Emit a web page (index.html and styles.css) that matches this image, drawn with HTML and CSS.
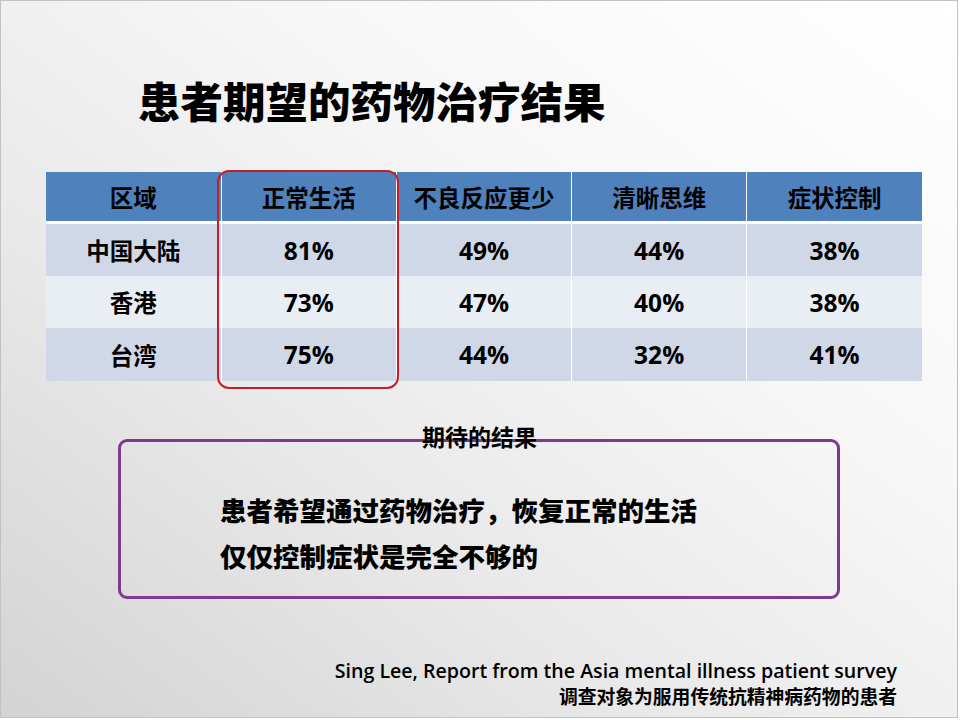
FILE: index.html
```html
<!DOCTYPE html>
<html lang="zh-CN">
<head>
<meta charset="utf-8">
<title>患者期望的药物治疗结果</title>
<link rel="stylesheet" href="styles.css">
</head>
<body>
<div class="slide">
  <h1 class="title">患者期望的药物治疗结果</h1>
  <div class="table-wrap">
    <table class="data">
      <thead>
        <tr><th>区域</th><th>正常生活</th><th>不良反应更少</th><th>清晰思维</th><th>症状控制</th></tr>
      </thead>
      <tbody>
        <tr class="odd"><td class="region">中国大陆</td><td>81%</td><td>49%</td><td>44%</td><td>38%</td></tr>
        <tr class="even"><td class="region">香港</td><td>73%</td><td>47%</td><td>40%</td><td>38%</td></tr>
        <tr class="odd last"><td class="region">台湾</td><td>75%</td><td>44%</td><td>32%</td><td>41%</td></tr>
      </tbody>
    </table>
    <div class="highlight"></div>
  </div>
  <div class="callout">
    <div class="callout-label">期待的结果</div>
    <p>患者希望通过药物治疗，恢复正常的生活</p>
    <p>仅仅控制症状是完全不够的</p>
  </div>
  <div class="footer">
    <div class="cite">Sing Lee, Report from the Asia mental illness patient survey</div>
    <div class="note">调查对象为服用传统抗精神病药物的患者</div>
  </div>
</div>
</body>
</html>
```
FILE: styles.css
```css
html, body {
  margin: 0;
  padding: 0;
  background: #ffffff;
}
body {
  font-family: "Noto Sans CJK SC", "Open Sans", sans-serif;
  color: #000;
}
.slide {
  box-sizing: border-box;
  width: 958px;
  height: 718px;
  border: 1px solid #c2c2c2;
  background: linear-gradient(to top right, #d3d3d3 0%, #e9e9e9 35%, #f7f7f7 65%, #ffffff 100%);
  display: flex;
  flex-direction: column;
  position: relative;
}
.title {
  margin: 0;
  padding: 76px 0 0 137px;
  font-family: "Noto Sans CJK SC", sans-serif;
  font-weight: 900;
  font-size: 42.5px;
  line-height: 46px;
  color: #000;
}
.table-wrap {
  position: relative;
  margin: 49px 0 0 45px;
  width: 876px;
}
.data {
  border-collapse: collapse;
  table-layout: fixed;
  width: 876px;
}
.data th,
.data td {
  padding: 0;
  text-align: center;
  vertical-align: middle;
  border-left: 1px solid #ffffff;
}
.data th:first-child,
.data td:first-child {
  border-left: none;
}
.data th {
  background: #4f81bd;
  height: 49px;
  border-bottom: 3px solid #ffffff;
  font-family: "Noto Sans CJK SC", sans-serif;
  font-weight: 700;
  font-size: 23.5px;
  color: #000;
}
.data td {
  height: 52px;
  font-family: "Open Sans", sans-serif;
  font-weight: 700;
  font-size: 24.5px;
  color: #000;
}
.data td.region {
  font-family: "Noto Sans CJK SC", sans-serif;
  font-size: 23.5px;
}
.data tr.odd td {
  background: #d0d8e8;
}
.data tr.even td {
  background: #e9edf4;
}
.data tr.last td {
  height: 53px;
}
.highlight {
  position: absolute;
  left: 171px;
  top: -2px;
  width: 182px;
  height: 219px;
  box-sizing: border-box;
  border: 2.5px solid #c01f2b;
  border-radius: 12px;
}
.callout {
  position: relative;
  box-sizing: border-box;
  margin: 58px 0 0 117px;
  width: 722px;
  height: 160px;
  border: 3px solid #7e3b8e;
  border-radius: 9px;
  padding: 45px 0 0 99px;
}
.callout-label {
  position: absolute;
  left: 0;
  right: 0;
  top: -18px;
  text-align: center;
  font-family: "Noto Sans CJK SC", sans-serif;
  font-weight: 700;
  font-size: 23px;
  line-height: 24px;
  padding-left: 1px;
}
.callout p {
  margin: 0;
  font-family: "Noto Sans CJK SC", sans-serif;
  font-weight: 900;
  font-size: 26.5px;
  line-height: 46px;
}
.footer {
  margin-top: auto;
  padding: 0 60px 10px 0;
  text-align: right;
}
.cite {
  font-family: "Open Sans", sans-serif;
  font-weight: 600;
  font-size: 19.6px;
  line-height: 27px;
}
.note {
  font-family: "Noto Sans CJK SC", sans-serif;
  font-weight: 700;
  font-size: 18.8px;
  line-height: 23px;
}
```
